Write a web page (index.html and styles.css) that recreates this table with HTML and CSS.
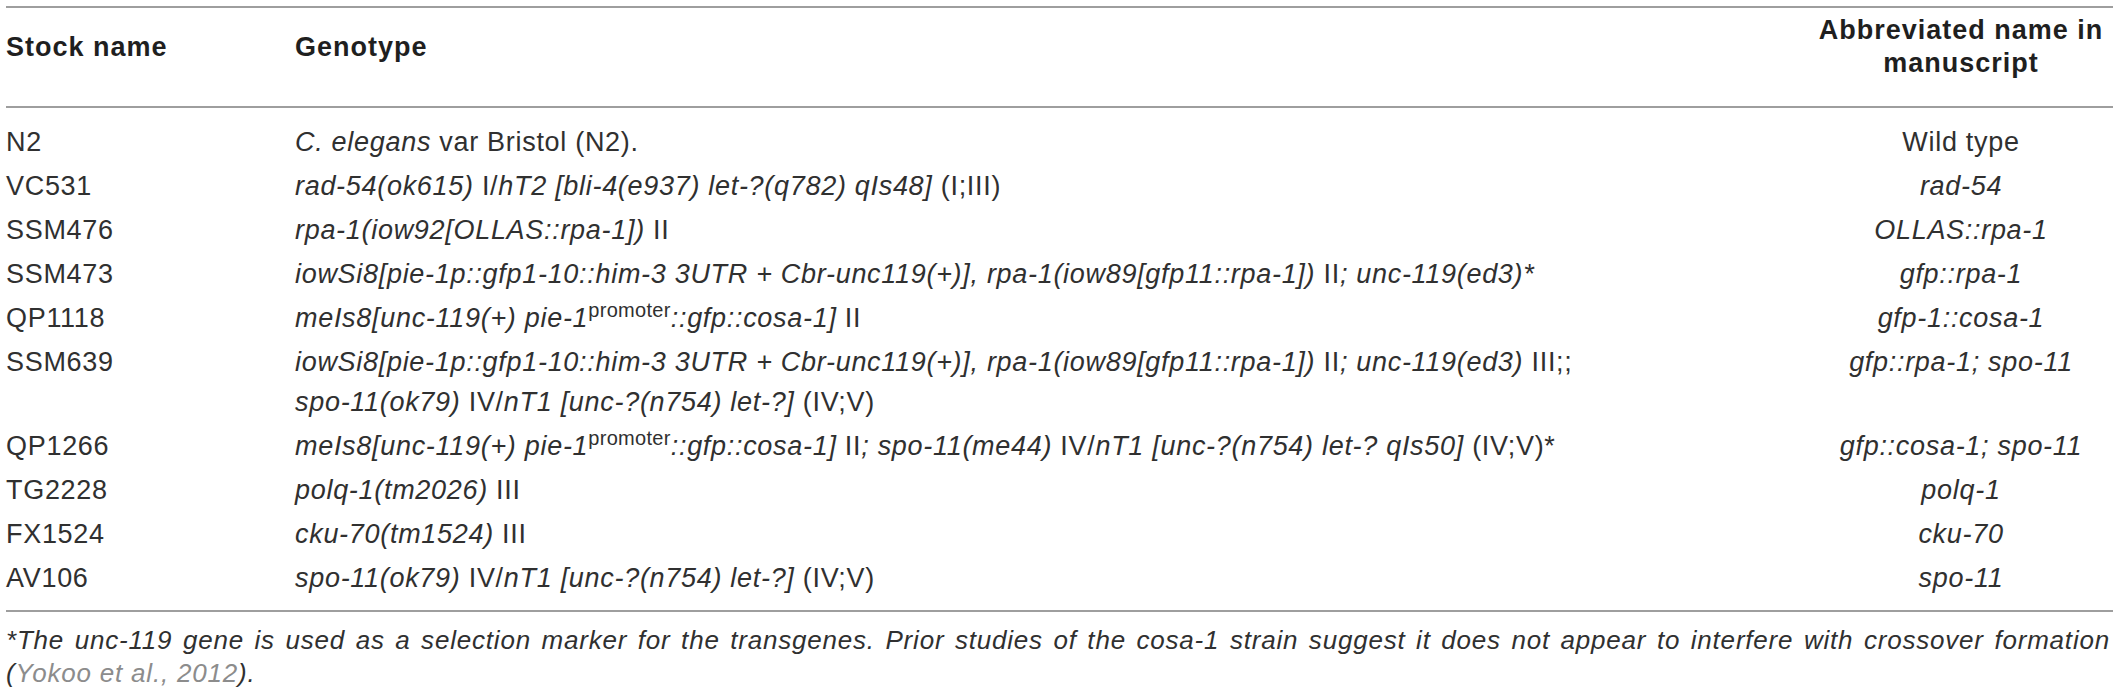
FILE: index.html
```html
<!DOCTYPE html>
<html lang="en">
<head>
<meta charset="utf-8">
<title>Strains used in this study</title>
<link rel="stylesheet" href="styles.css">
</head>
<body>
<div class="wrap">
  <table class="strains">
    <colgroup>
      <col class="col-stock">
      <col class="col-geno">
      <col class="col-abbr">
    </colgroup>
    <thead>
      <tr>
        <th class="stock">Stock name</th>
        <th class="geno">Genotype</th>
        <th class="abbr">Abbreviated name in<br>manuscript</th>
      </tr>
    </thead>
    <tbody>
      <tr>
        <td class="stock">N2</td>
        <td class="geno"><i>C. elegans</i> var Bristol (N2).</td>
        <td class="abbr">Wild type</td>
      </tr>
      <tr>
        <td class="stock">VC531</td>
        <td class="geno"><i>rad-54(ok615)</i> I/<i>hT2 [bli-4(e937) let-?(q782) qIs48]</i> (I;III)</td>
        <td class="abbr"><i>rad-54</i></td>
      </tr>
      <tr>
        <td class="stock">SSM476</td>
        <td class="geno"><i>rpa-1(iow92[OLLAS::rpa-1])</i> II</td>
        <td class="abbr"><i>OLLAS::rpa-1</i></td>
      </tr>
      <tr>
        <td class="stock">SSM473</td>
        <td class="geno"><i>iowSi8[pie-1p::gfp1-10::him-3 3UTR + Cbr-unc119(+)], rpa-1(iow89[gfp11::rpa-1])</i> II<i>; unc-119(ed3)*</i></td>
        <td class="abbr"><i>gfp::rpa-1</i></td>
      </tr>
      <tr>
        <td class="stock">QP1118</td>
        <td class="geno"><i>meIs8[unc-119(+) pie-1</i><sup>promoter</sup><i>::gfp::cosa-1]</i> II</td>
        <td class="abbr"><i>gfp-1::cosa-1</i></td>
      </tr>
      <tr>
        <td class="stock">SSM639</td>
        <td class="geno"><i>iowSi8[pie-1p::gfp1-10::him-3 3UTR + Cbr-unc119(+)], rpa-1(iow89[gfp11::rpa-1])</i> II<i>; unc-119(ed3)</i> III;;<br><i>spo-11(ok79)</i> IV/<i>nT1 [unc-?(n754) let-?]</i> (IV;V)</td>
        <td class="abbr"><i>gfp::rpa-1; spo-11</i></td>
      </tr>
      <tr>
        <td class="stock">QP1266</td>
        <td class="geno"><i>meIs8[unc-119(+) pie-1</i><sup>promoter</sup><i>::gfp::cosa-1]</i> II<i>; spo-11(me44)</i> IV/<i>nT1 [unc-?(n754) let-? qIs50]</i> (IV;V)*</td>
        <td class="abbr"><i>gfp::cosa-1; spo-11</i></td>
      </tr>
      <tr>
        <td class="stock">TG2228</td>
        <td class="geno"><i>polq-1(tm2026)</i> III</td>
        <td class="abbr"><i>polq-1</i></td>
      </tr>
      <tr>
        <td class="stock">FX1524</td>
        <td class="geno"><i>cku-70(tm1524)</i> III</td>
        <td class="abbr"><i>cku-70</i></td>
      </tr>
      <tr>
        <td class="stock">AV106</td>
        <td class="geno"><i>spo-11(ok79)</i> IV/<i>nT1 [unc-?(n754) let-?]</i> (IV;V)</td>
        <td class="abbr"><i>spo-11</i></td>
      </tr>
    </tbody>
  </table>
  <div class="note">
    <div class="note-line note-first">*The unc-119 gene is used as a selection marker for the transgenes. Prior studies of the cosa-1 strain suggest it does not appear to interfere with crossover formation</div>
    <div class="note-line">(<span class="ref">Yokoo et al., 2012</span>).</div>
  </div>
</div>
</body>
</html>
```

FILE: styles.css
```css
html, body {
  margin: 0;
  padding: 0;
  background: #ffffff;
}

body {
  font-family: "Liberation Sans", Arial, Helvetica, sans-serif;
  color: #303030;
}

.wrap {
  padding: 6px 0 0 6px;
  width: 2107px;
}

.strains {
  width: 2107px;
  table-layout: fixed;
  border-collapse: separate;
  border-spacing: 0;
}

.col-stock { width: 289px; }
.col-geno { width: 1514px; }
.col-abbr { width: 304px; }

.strains th {
  font-size: 27px;
  font-weight: 700;
  letter-spacing: 1px;
  line-height: 33px;
  padding: 6px 0 26px 0;
  text-align: left;
  vertical-align: middle;
  border-top: 2px solid #9e9e9e;
  border-bottom: 2px solid #9e9e9e;
  color: #1f1f1f;
}

.strains th.abbr {
  text-align: center;
}

.strains td {
  font-size: 27px;
  letter-spacing: 0.7px;
  line-height: 40px;
  padding: 2px 0;
  vertical-align: top;
  text-align: left;
  white-space: nowrap;
}

.strains td.abbr {
  text-align: center;
}

.strains tbody tr:first-child td {
  padding-top: 14px;
}

.strains tbody tr:last-child td {
  padding-bottom: 12px;
  border-bottom: 2px solid #9e9e9e;
}

.strains sup {
  font-size: 20px;
  line-height: 0;
  vertical-align: 10px;
  font-style: normal;
  letter-spacing: 0.3px;
}

.note {
  margin-top: 12px;
  font-size: 26px;
  font-style: italic;
  line-height: 33px;
  letter-spacing: 0.8px;
  color: #303030;
}

.note-first {
  text-align: justify;
  text-align-last: justify;
  white-space: nowrap;
}

.note-line {
  width: 2104px;
}

.ref {
  color: #8c8c8c;
}
```
